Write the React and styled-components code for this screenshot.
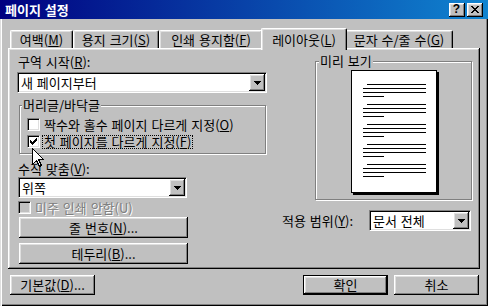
import React from "react";
import styled, { createGlobalStyle, css } from "styled-components";

const GlobalStyle = createGlobalStyle`
  html, body { margin: 0; padding: 0; background: #c0c0c0; }
  body { font-family: "Noto Sans CJK KR", "Noto Sans", sans-serif; font-size: 13px; }
  #root { width: 488px; height: 306px; }
  u { text-underline-offset: 1px; }
`;

const raised = css`
  background: #c0c0c0;
  box-shadow: inset -1px -1px #000, inset 1px 1px #fff, inset -2px -2px #808080,
    inset 2px 2px #dfdfdf;
`;

const sunken = css`
  border: 1px solid;
  border-color: #808080 #fff #fff #808080;
  box-shadow: inset 1px 1px #000, inset -1px -1px #dfdfdf;
`;

const Window = styled.div`
  position: relative;
  width: 488px;
  height: 306px;
  display: flex;
  flex-direction: column;
  background: #c0c0c0;
  color: #000;
  font-family: "Noto Sans CJK KR", "Noto Sans", sans-serif;
  font-size: 13px;
  line-height: 14px;
  word-spacing: 1px;
  overflow: hidden;
`;

const TitleBar = styled.div`
  flex: none;
  height: 19px;
  display: flex;
  align-items: center;
  justify-content: space-between;
  padding: 0 5px;
  background: linear-gradient(to right, #000080, #1084d0);
`;

const Title = styled.span`
  color: #fff;
  font-weight: bold;
  white-space: nowrap;
`;

const CaptionButtons = styled.div`
  display: flex;
  gap: 2px;
`;

const CaptionButton = styled.div`
  width: 16px;
  height: 14px;
  box-sizing: border-box;
  ${raised};
  display: flex;
  align-items: center;
  justify-content: center;
  font-family: "Liberation Sans", sans-serif;
  font-weight: bold;
  font-size: 12px;
  line-height: 12px;
  padding: 0 1px 1px 0;
`;

const Body = styled.div`
  flex: 1;
  display: flex;
  flex-direction: column;
  padding: 9px 8px 0 8px;
  box-shadow: inset 1px 0 #dfdfdf, inset 2px 0 #fff, inset -1px -1px #000,
    inset -2px -2px #808080;
`;

const TabStrip = styled.div`
  display: flex;
  align-items: flex-end;
  height: 20px;
  padding-left: 2px;
  position: relative;
  z-index: 1;
`;

const Tab = styled.div`
  flex: none;
  box-sizing: border-box;
  width: ${(p) => (p.$active ? p.$w + 4 : p.$w)}px;
  height: ${(p) => (p.$active ? 22 : 18)}px;
  margin: ${(p) => (p.$active ? "0 -2px -2px" : "0")};
  border-top: 1px solid #fff;
  border-left: 1px solid #fff;
  border-right: 1px solid #000;
  border-radius: 2px 2px 0 0;
  box-shadow: inset -1px 0 #808080, inset 1px 1px #dfdfdf;
  background: #c0c0c0;
  display: flex;
  align-items: center;
  justify-content: center;
  position: relative;
  z-index: ${(p) => (p.$active ? 2 : 1)};
  white-space: nowrap;
`;

const Panel = styled.div`
  height: 221px;
  box-sizing: border-box;
  display: flex;
  padding: 7px 0 0 9px;
  box-shadow: inset -1px -1px #000, inset 1px 1px #fff, inset -2px -2px #808080,
    inset 2px 2px #dfdfdf;
`;

const Column = styled.div`
  flex: none;
  width: ${(p) => p.$w}px;
  margin-left: ${(p) => p.$ml || 0}px;
  display: flex;
  flex-direction: column;
`;

const Label = styled.div`
  height: 14px;
  flex: none;
  padding-left: ${(p) => (p.$pl == null ? 1 : p.$pl)}px;
  margin-top: ${(p) => p.$mt || 0}px;
  white-space: nowrap;
  width: ${(p) => (p.$w ? `${p.$w}px` : "auto")};
  box-sizing: border-box;
`;

const Combo = styled.div`
  flex: none;
  display: flex;
  align-items: center;
  box-sizing: border-box;
  width: ${(p) => p.$w}px;
  height: 21px;
  margin-top: ${(p) => p.$mt || 0}px;
  margin-left: ${(p) => p.$ml || 0}px;
  padding: 1px;
  background: #fff;
  ${sunken};
`;

const ComboText = styled.span`
  flex: 1;
  padding-left: 2px;
  white-space: nowrap;
`;

const DropButton = styled.div`
  flex: none;
  width: 16px;
  height: 17px;
  box-sizing: border-box;
  ${raised};
  display: flex;
  align-items: center;
  justify-content: center;
`;

const Group = styled.div`
  flex: none;
  box-sizing: border-box;
  width: ${(p) => p.$w}px;
  margin-top: ${(p) => p.$mt || 0}px;
  margin-left: ${(p) => p.$ml || 0}px;
  padding-bottom: ${(p) => p.$pb || 0}px;
  border: 1px solid #808080;
  box-shadow: inset 1px 1px #fff, 1px 1px #fff;
  display: flex;
  flex-direction: column;
`;

const GroupTitle = styled.div`
  align-self: flex-start;
  height: 14px;
  margin: -8px 0 0 ${(p) => p.$ml || 2}px;
  padding: 0 1px;
  background: #c0c0c0;
  white-space: nowrap;
`;

const CheckList = styled.div`
  display: flex;
  flex-direction: column;
  margin-top: 4px;
  padding-left: 7px;
`;

const CheckRow = styled.div`
  flex: none;
  display: flex;
  align-items: center;
  gap: 2px;
  height: 17px;
  margin-top: ${(p) => p.$mt || 0}px;
  margin-left: ${(p) => p.$ml || 0}px;
  color: ${(p) => (p.$disabled ? "#808080" : "#000")};
  text-shadow: ${(p) => (p.$disabled ? "1px 1px #fff" : "none")};
`;

const CheckBox = styled.span`
  flex: none;
  width: 13px;
  height: 13px;
  box-sizing: border-box;
  ${sunken};
  background: ${(p) => (p.$disabled ? "#c0c0c0" : "#fff")};
  display: flex;
  align-items: center;
  justify-content: center;
`;

const CheckLabel = styled.span`
  padding: 0 1px;
  line-height: 12px;
  border: 1px ${(p) => (p.$focus ? "dotted #000" : "solid transparent")};
  white-space: nowrap;
`;

const Button = styled.div`
  flex: none;
  box-sizing: border-box;
  width: ${(p) => p.$w}px;
  height: ${(p) => p.$h || 21}px;
  margin-top: ${(p) => p.$mt || 0}px;
  margin-left: ${(p) => p.$ml || 0}px;
  ${raised};
  border: ${(p) => (p.$default ? "1px solid #000" : "none")};
  display: flex;
  align-items: center;
  justify-content: center;
  white-space: nowrap;
`;

const PreviewPage = styled.div`
  align-self: center;
  margin-top: 2px;
  width: 86px;
  height: 123px;
  box-sizing: border-box;
  border: 1px solid #000;
  background: #fff;
  box-shadow: 2px 2px 0 #000;
  display: flex;
`;

const ApplyRow = styled.div`
  display: flex;
  align-items: center;
  margin-top: 10px;
`;

const ButtonRow = styled.div`
  display: flex;
  gap: 6px;
  margin-top: 6px;
  padding: 0 1px 0 2px;
`;

const Spacer = styled.div`
  flex: 1;
`;

const Cursor = styled.svg`
  position: absolute;
  left: 32px;
  top: 148px;
  z-index: 10;
  pointer-events: none;
`;

const Arrow = () => (
  <svg width="7" height="4" viewBox="0 0 7 4" shapeRendering="crispEdges">
    <path d="M0 0h7v1H0zM1 1h5v1H1zM2 2h3v1H2zM3 3h1v1H3z" fill="#000" />
  </svg>
);

const Check = () => (
  <svg width="7" height="7" viewBox="0 0 7 7" shapeRendering="crispEdges">
    <path
      d="M6 0h1v1H6zM5 1h2v1H5zM0 2h1v1H0zM4 2h3v1H4zM0 3h2v1H0zM3 3h3v1H3zM0 4h5v1H0zM1 5h3v1H1zM2 6h1v1H2z"
      fill="#000"
    />
  </svg>
);

const CloseGlyph = () => (
  <svg width="8" height="7" viewBox="0 0 8 7" shapeRendering="crispEdges">
    <path
      d="M0 0h2v1H0zM6 0h2v1H6zM1 1h2v1H1zM5 1h2v1H5zM2 2h4v1H2zM3 3h2v1H3zM2 4h4v1H2zM1 5h2v1H1zM5 5h2v1H5zM0 6h2v1H0zM6 6h2v1H6z"
      fill="#000"
    />
  </svg>
);

const PageLines = () => {
  const rows = [];
  for (let k = 0; k < 5; k++) {
    const y = 13 + k * 20;
    rows.push(
      <g key={k}>
        <rect x="15" y={y} width="59" height="1" />
        <rect x="11" y={y + 4} width="63" height="1" />
        <rect x="11" y={y + 8} width="63" height="1" />
        <rect x="11" y={y + 12} width="21" height="1" />
      </g>
    );
  }
  return (
    <svg width="84" height="121" viewBox="0 0 84 121" shapeRendering="crispEdges" fill="#000">
      {rows}
    </svg>
  );
};

const tabs = [
  { label: "여백", key: "M", w: 63 },
  { label: "용지 크기", key: "S", w: 86 },
  { label: "인쇄 용지함", key: "F", w: 104 },
  { label: "레이아웃", key: "L", w: 82, active: true },
  { label: "문자 수/줄 수", key: "G", w: 108 },
];

const Mn = ({ text, k, tail = "" }) => (
  <>
    {text}(<u>{k}</u>){tail}
  </>
);

export default function App() {
  return (
    <>
      <GlobalStyle />
      <Window>
        <TitleBar>
          <Title>페이지 설정</Title>
          <CaptionButtons>
            <CaptionButton>?</CaptionButton>
            <CaptionButton>
              <CloseGlyph />
            </CaptionButton>
          </CaptionButtons>
        </TitleBar>
        <Body>
          <TabStrip>
            {tabs.map((t) => (
              <Tab key={t.key} $w={t.w} $active={t.active}>
                <Mn text={t.label} k={t.key} />
              </Tab>
            ))}
          </TabStrip>
          <Panel>
            <Column $w={250}>
              <Label>
                <Mn text="구역 시작" k="R" tail=":" />
              </Label>
              <Combo $w={250} $mt={3}>
                <ComboText>새 페이지부터</ComboText>
                <DropButton>
                  <Arrow />
                </DropButton>
              </Combo>
              <Group $w={247} $mt={12} $ml={2} $pb={3}>
                <GroupTitle $ml={2}>머리글/바닥글</GroupTitle>
                <CheckList>
                  <CheckRow>
                    <CheckBox />
                    <CheckLabel>
                      <Mn text="짝수와 홀수 페이지 다르게 지정" k="O" />
                    </CheckLabel>
                  </CheckRow>
                  <CheckRow>
                    <CheckBox>
                      <Check />
                    </CheckBox>
                    <CheckLabel $focus>
                      <Mn text="첫 페이지를 다르게 지정" k="F" />
                    </CheckLabel>
                  </CheckRow>
                </CheckList>
              </Group>
              <Label $mt={8}>
                <Mn text="수직 맞춤" k="V" tail=":" />
              </Label>
              <Combo $w={169} $mt={1} $ml={1}>
                <ComboText>위쪽</ComboText>
                <DropButton>
                  <Arrow />
                </DropButton>
              </Combo>
              <CheckRow $mt={1} $ml={1} $disabled>
                <CheckBox $disabled />
                <CheckLabel>미주 인쇄 안함(U)</CheckLabel>
              </CheckRow>
              <Button $w={169} $mt={1} $ml={2}>
                <Mn text="줄 번호" k="N" tail="..." />
              </Button>
              <Button $w={169} $mt={5} $ml={2}>
                <Mn text="테두리" k="B" tail="..." />
              </Button>
            </Column>
            <Column $w={191} $ml={15}>
              <Group $w={157} $mt={6} $ml={33} $pb={6}>
                <GroupTitle $ml={3}>미리 보기</GroupTitle>
                <PreviewPage>
                  <PageLines />
                </PreviewPage>
              </Group>
              <ApplyRow>
                <Label $pl={0} $w={87}>
                  <Mn text="적용 범위" k="Y" tail=":" />
                </Label>
                <Combo $w={102}>
                  <ComboText>문서 전체</ComboText>
                  <DropButton>
                    <Arrow />
                  </DropButton>
                </Combo>
              </ApplyRow>
            </Column>
          </Panel>
          <ButtonRow>
            <Button $w={85} $h={20}>
              <Mn text="기본값" k="D" tail="..." />
            </Button>
            <Spacer />
            <Button $w={85} $h={20} $default>
              확인
            </Button>
            <Button $w={85} $h={20}>
              취소
            </Button>
          </ButtonRow>
        </Body>
        <Cursor width="12" height="20" viewBox="0 0 12 20" shapeRendering="crispEdges">
          <path
            d="M0.5 0.5 L0.5 16.5 L4.5 12.5 L7.5 18.5 L9.5 17.5 L6.5 11.5 L11.5 11.5 Z"
            fill="#fff"
            stroke="#000"
            strokeWidth="1"
          />
        </Cursor>
      </Window>
    </>
  );
}
